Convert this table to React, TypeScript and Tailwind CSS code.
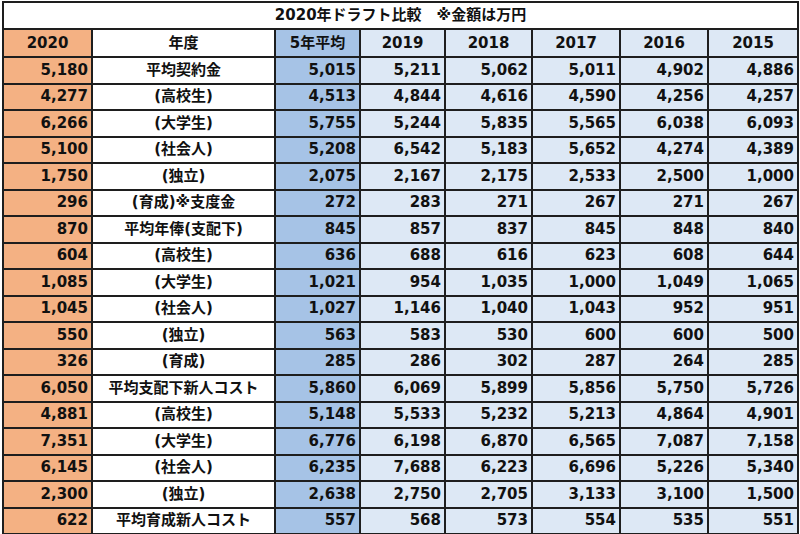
import React from 'react';

const headers = ['2020', '年度', '5年平均', '2019', '2018', '2017', '2016', '2015'];

const rows: string[][] = [
    ['5,180', '平均契約金', '5,015', '5,211', '5,062', '5,011', '4,902', '4,886'],
    ['4,277', '(高校生)', '4,513', '4,844', '4,616', '4,590', '4,256', '4,257'],
    ['6,266', '(大学生)', '5,755', '5,244', '5,835', '5,565', '6,038', '6,093'],
    ['5,100', '(社会人)', '5,208', '6,542', '5,183', '5,652', '4,274', '4,389'],
    ['1,750', '(独立)', '2,075', '2,167', '2,175', '2,533', '2,500', '1,000'],
    ['296', '(育成)※支度金', '272', '283', '271', '267', '271', '267'],
    ['870', '平均年俸(支配下)', '845', '857', '837', '845', '848', '840'],
    ['604', '(高校生)', '636', '688', '616', '623', '608', '644'],
    ['1,085', '(大学生)', '1,021', '954', '1,035', '1,000', '1,049', '1,065'],
    ['1,045', '(社会人)', '1,027', '1,146', '1,040', '1,043', '952', '951'],
    ['550', '(独立)', '563', '583', '530', '600', '600', '500'],
    ['326', '(育成)', '285', '286', '302', '287', '264', '285'],
    ['6,050', '平均支配下新人コスト', '5,860', '6,069', '5,899', '5,856', '5,750', '5,726'],
    ['4,881', '(高校生)', '5,148', '5,533', '5,232', '5,213', '4,864', '4,901'],
    ['7,351', '(大学生)', '6,776', '6,198', '6,870', '6,565', '7,087', '7,158'],
    ['6,145', '(社会人)', '6,235', '7,688', '6,223', '6,696', '5,226', '5,340'],
    ['2,300', '(独立)', '2,638', '2,750', '2,705', '3,133', '3,100', '1,500'],
    ['622', '平均育成新人コスト', '557', '568', '573', '554', '535', '551'],
    ['', '', '', '', '', '', '', ''],
];

// background per column
const colBg = (i: number) =>
    i === 0 ? 'bg-[#f4b183]' : i === 1 ? 'bg-white' : i === 2 ? 'bg-[#a6c3e6]' : 'bg-[#dde8f5]';

export default function App() {
    return (
        <div className="w-[800px] h-[534px] overflow-hidden bg-white pl-[2px] pt-[1px] font-['DejaVu_Sans','Noto_Sans_CJK_JP',sans-serif] font-bold text-[15px] text-[#111]">
            <div className="grid w-[797px] grid-cols-[87px_181px_83px_83px_85px_86px_86px_88px] grid-rows-[25px_26px_repeat(19,24.5px)] gap-[2px] bg-[#1e1e1e] p-[2px]">
                {/* Title */}
                <div className="col-span-8 bg-white flex items-center justify-center leading-none">
                    2020年ドラフト比較　※金額は万円
                </div>

                {/* Header */}
                {headers.map((h, i) => (
                    <div key={h} className={`${colBg(i)} flex items-center justify-center leading-none`}>
                        {h}
                    </div>
                ))}

                {/* Body */}
                {rows.map((row, r) =>
                    row.map((cell, i) => (
                        <div
                            key={`${r}-${i}`}
                            className={`${colBg(i)} flex items-center leading-none ${i === 1 ? 'justify-center' : 'justify-end pr-[3px]'}`}
                        >
                            {cell}
                        </div>
                    ))
                )}
            </div>
        </div>
    );
}
